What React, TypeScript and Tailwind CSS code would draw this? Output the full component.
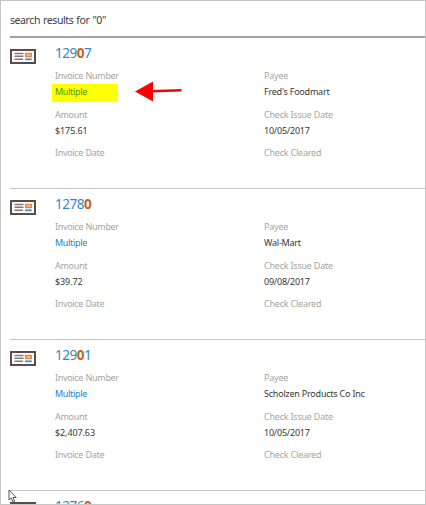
import React from "react";

interface CheckRecord {
  before: string;
  match: string;
  after: string;
  details?: {
    invoiceNumber: string;
    payee: string;
    amount: string;
    issueDate: string;
  };
  marked?: boolean;
}

const records: CheckRecord[] = [
  {
    before: "129",
    match: "0",
    after: "7",
    details: {
      invoiceNumber: "Multiple",
      payee: "Fred's Foodmart",
      amount: "$175.61",
      issueDate: "10/05/2017",
    },
    marked: true,
  },
  {
    before: "1278",
    match: "0",
    after: "",
    details: {
      invoiceNumber: "Multiple",
      payee: "Wal-Mart",
      amount: "$39.72",
      issueDate: "09/08/2017",
    },
  },
  {
    before: "129",
    match: "0",
    after: "1",
    details: {
      invoiceNumber: "Multiple",
      payee: "Scholzen Products Co Inc",
      amount: "$2,407.63",
      issueDate: "10/05/2017",
    },
  },
  { before: "1276", match: "0", after: "" },
];

const CheckIcon = (): React.JSX.Element => (
  <svg className="mt-[11px] block h-[15px] w-[26px] shrink-0" viewBox="0 0 26 15">
    <rect x="1" y="1" width="24" height="13" fill="#fff" stroke="#5a4d47" strokeWidth="2" />
    <path d="M4.5 4.5h9M4.5 7.2h9M4.5 10.2h8.5" stroke="#807a7a" strokeWidth="1.4" />
    <rect x="15.7" y="4.5" width="5.6" height="3" fill="#f6c9a3" stroke="#e08a45" strokeWidth="1.5" />
    <path d="M15 10.3h6.8" stroke="#3f94da" strokeWidth="1.8" />
  </svg>
);

const Arrow = (): React.JSX.Element => (
  <svg className="block h-[22px] w-[48px]" viewBox="0 0 48 22">
    <path d="M0 11.5 18 1.5v20z" fill="#fe0000" />
    <path d="M16 11.3 46.5 10.3" stroke="#fe0000" strokeWidth="2.6" />
  </svg>
);

const Field = ({ label, children }: { label: string; children?: React.ReactNode }) => (
  <div className="h-[38.5px]">
    <div className="h-4 leading-4 text-[#a5a5a0]">{label}</div>
    <div className="h-4 leading-4 text-[#383838]">{children}</div>
  </div>
);

const Result = ({ record }: { record: CheckRecord }) => (
  <div className="flex h-[151px] shrink-0">
    <CheckIcon />
    <div className="ml-[19px] flex-1">
      <div className="h-[30px] pt-[5px] text-[13.6px] leading-5 tracking-[-0.5px] text-[#3487cc]">
        {record.before}
        <span className="font-bold text-[#cc6218]">{record.match}</span>
        {record.after}
      </div>
      {record.details && (
        <div className="flex whitespace-nowrap text-[9px] tracking-[-0.22px]">
          <div className="w-[209px] tracking-[-0.32px] [word-spacing:0.4px]">
            <Field label="Invoice Number">
              {record.marked ? (
                <div className="relative -ml-[3px] h-[18px] w-[66px] bg-[#ffff00] pl-[3px] text-[#4f9500]">
                  {record.details.invoiceNumber}
                  <div className="absolute left-[83px] top-[-4px]">
                    <Arrow />
                  </div>
                </div>
              ) : (
                <span className="text-[#2b80cc]">{record.details.invoiceNumber}</span>
              )}
            </Field>
            <Field label="Amount">
              <span className="tracking-[-0.1px]">{record.details.amount}</span>
            </Field>
            <Field label="Invoice Date" />
          </div>
          <div>
            <Field label="Payee">{record.details.payee}</Field>
            <Field label="Check Issue Date">{record.details.issueDate}</Field>
            <Field label="Check Cleared" />
          </div>
        </div>
      )}
    </div>
  </div>
);

export default function App() {
  return (
    <main className="relative h-[505px] w-[426px] overflow-hidden border border-[#c6c6c6] bg-white pl-[9px] font-['Noto_Sans',sans-serif]">
      <h1 className="h-[35px] pt-[9px] text-[10.5px] leading-5 tracking-[-0.42px] text-[#404040] [word-spacing:0.8px]">
        search results for "0"
      </h1>
      {records.map((record, i) => (
        <section
          key={record.before + record.after}
          className={i === 0 ? "border-t-2 border-[#a2a2a2]" : "-mt-px border-t border-[#c4c4c4]"}
        >
          <Result record={record} />
        </section>
      ))}
      <svg className="absolute left-[7px] top-[488px] h-[14px] w-[10px]" viewBox="0 0 10 14">
        <path
          d="M1 1v10l2.3-2 1.7 4 1.7-.8L5 8.5h3.2z"
          fill="#fff"
          stroke="#55555f"
          strokeWidth="1"
        />
      </svg>
    </main>
  );
}
